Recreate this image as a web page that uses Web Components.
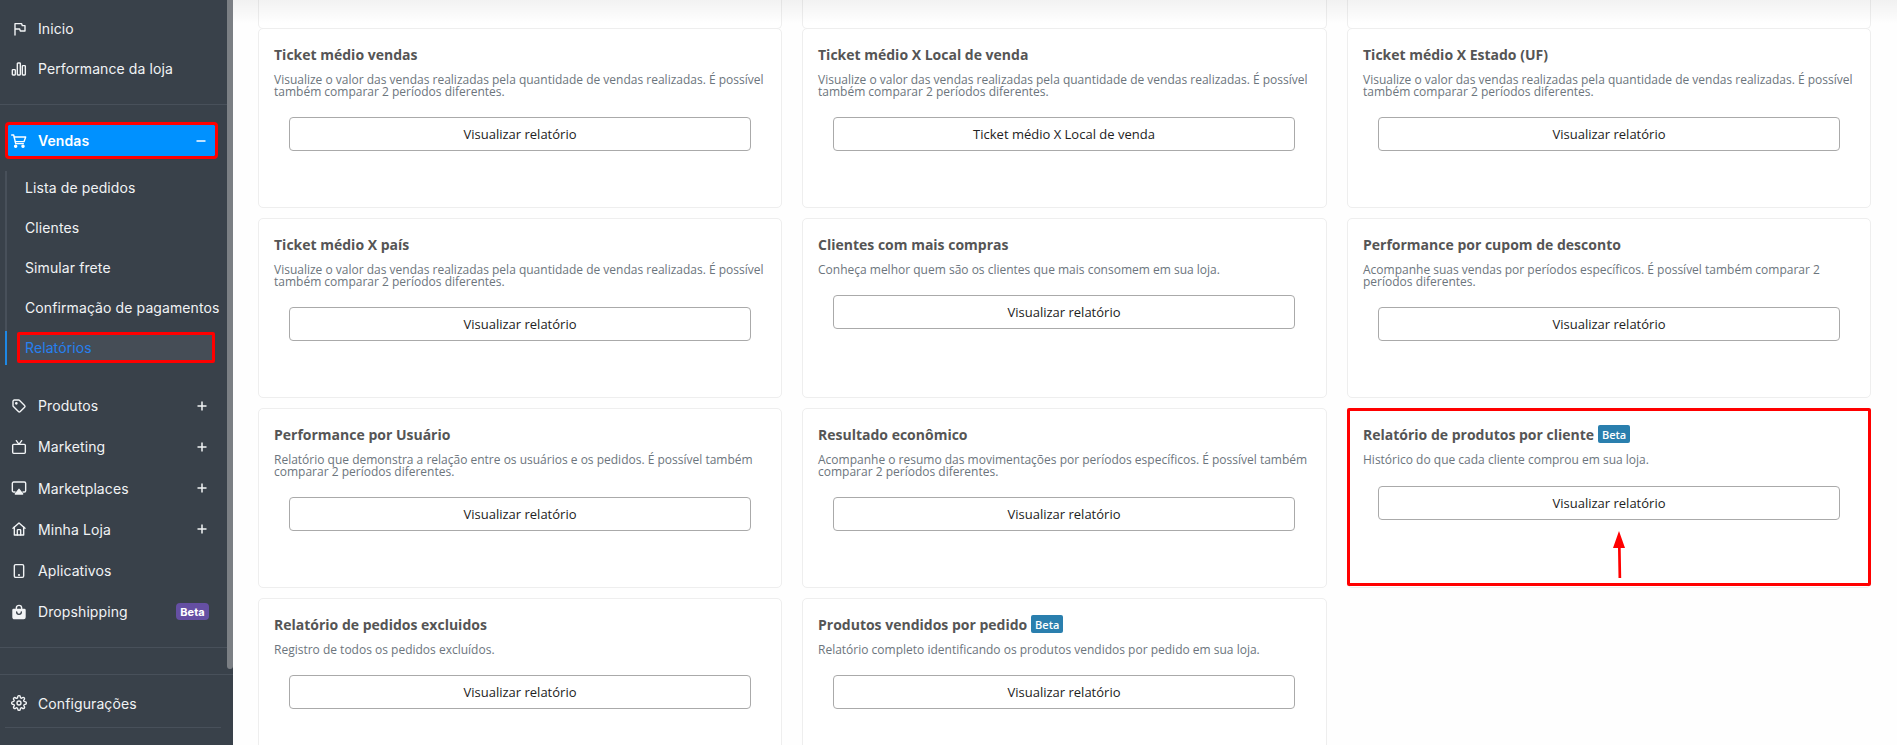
<!DOCTYPE html>
<html lang="pt-BR">
<head>
<meta charset="utf-8">
<title>Relatórios</title>
<style>
	html, body { margin: 0; height: 100%; overflow: hidden; background: #fefefe; }
</style>
</head>
<body>
<app-shell>
	<side-nav slot="nav">
		<nav-item icon="flag">Inicio</nav-item>
		<nav-item icon="chart">Performance da loja</nav-item>
		<nav-rule style="margin-top:15px"></nav-rule>
		<nav-item icon="cart" active toggle="minus" style="margin-top:20px">Vendas</nav-item>
		<sub-list style="margin-top:15px">
			<sub-item>Lista de pedidos</sub-item>
			<sub-item>Clientes</sub-item>
			<sub-item>Simular frete</sub-item>
			<sub-item>Confirmação de pagamentos</sub-item>
			<sub-item current>Relatórios</sub-item>
		</sub-list>
		<nav-item icon="tag" toggle="plus" class="tall" style="margin-top:20.7px">Produtos</nav-item>
		<nav-item icon="tv" toggle="plus" class="tall">Marketing</nav-item>
		<nav-item icon="airplay" toggle="plus" class="tall">Marketplaces</nav-item>
		<nav-item icon="home" toggle="plus" class="tall">Minha Loja</nav-item>
		<nav-item icon="device" class="tall">Aplicativos</nav-item>
		<nav-item icon="bag" class="tall">Dropshipping<beta-badge slot="end" tone="purple">Beta</beta-badge></nav-item>
		<nav-rule style="margin-top:14px"></nav-rule>
		<nav-rule style="margin-top:26px"></nav-rule>
		<nav-item icon="gear" style="margin-top:9px">Configurações</nav-item>
		<nav-rule style="margin:3px 12px 0 5px"></nav-rule>
	</side-nav>

	<report-grid>
		<report-card stub></report-card>
		<report-card stub></report-card>
		<report-card stub></report-card>

		<report-card heading="Ticket médio vendas">Visualize o valor das vendas realizadas pela quantidade de vendas realizadas. É possível também comparar 2 períodos diferentes.</report-card>
		<report-card heading="Ticket médio X Local de venda" action="Ticket médio X Local de venda">Visualize o valor das vendas realizadas pela quantidade de vendas realizadas. É possível também comparar 2 períodos diferentes.</report-card>
		<report-card heading="Ticket médio X Estado (UF)">Visualize o valor das vendas realizadas pela quantidade de vendas realizadas. É possível também comparar 2 períodos diferentes.</report-card>

		<report-card heading="Ticket médio X país">Visualize o valor das vendas realizadas pela quantidade de vendas realizadas. É possível também comparar 2 períodos diferentes.</report-card>
		<report-card heading="Clientes com mais compras">Conheça melhor quem são os clientes que mais consomem em sua loja.</report-card>
		<report-card heading="Performance por cupom de desconto">Acompanhe suas vendas por períodos específicos. É possível também comparar 2 períodos diferentes.</report-card>

		<report-card heading="Performance por Usuário">Relatório que demonstra a relação entre os usuários e os pedidos. É possível também comparar 2 períodos diferentes.</report-card>
		<report-card heading="Resultado econômico">Acompanhe o resumo das movimentações por períodos específicos. É possível também comparar 2 períodos diferentes.</report-card>
		<report-card heading="Relatório de produtos por cliente" highlight><beta-badge slot="badge">Beta</beta-badge>Histórico do que cada cliente comprou em sua loja.</report-card>

		<report-card heading="Relatório de pedidos excluidos">Registro de todos os pedidos excluídos.</report-card>
		<report-card heading="Produtos vendidos por pedido"><beta-badge slot="badge">Beta</beta-badge>Relatório completo identificando os produtos vendidos por pedido em sua loja.</report-card>
	</report-grid>
</app-shell>

<script>
	const ICONS = {
		flag: '<path d="M6 21V4h10l1 3h4v8h-7l-1-3H6"/>',
		chart: '<rect x="2" y="13" width="4.5" height="8" rx="1"/><rect x="9.5" y="3" width="4.5" height="18" rx="1"/><rect x="17" y="7" width="4.5" height="14" rx="1"/>',
		cart: '<circle cx="7" cy="20" r="1.6" fill="currentColor"/><circle cx="18" cy="20" r="1.6" fill="currentColor"/><path d="M1 3h3l3 13h11.5"/><path d="M5 6h17l-2.5 7H6.6"/>',
		tag: '<path d="M3 5a2 2 0 0 1 2-2h6.5a2 2 0 0 1 1.4.6l7.5 7.5a2 2 0 0 1 0 2.8l-6.5 6.5a2 2 0 0 1-2.8 0L3.6 12.9A2 2 0 0 1 3 11.5z"/><circle cx="8" cy="8" r="1" fill="currentColor"/>',
		tv: '<rect x="2.5" y="8" width="19" height="13.5" rx="1.5"/><path d="M8 2.5 12 8l4-5.5"/>',
		airplay: '<path d="M6 18H4a2 2 0 0 1-2-2V5a2 2 0 0 1 2-2h16a2 2 0 0 1 2 2v11a2 2 0 0 1-2 2h-2"/><path d="m12 14 5.5 7h-11z" fill="currentColor"/>',
		home: '<path d="M3 11 12 3l9 8"/><path d="M5 9v12h14V9"/><path d="M9.5 21v-7a1 1 0 0 1 1-1h3a1 1 0 0 1 1 1v7"/>',
		device: '<rect x="5" y="2.5" width="14" height="19" rx="2"/><circle cx="12" cy="18" r=".6" fill="currentColor"/>',
		bag: '<path d="M4 8h16a1 1 0 0 1 1 1v11a2 2 0 0 1-2 2H5a2 2 0 0 1-2-2V9a1 1 0 0 1 1-1z" fill="currentColor"/><path d="M8 9V6a4 4 0 0 1 8 0v3"/><path d="M8.5 12a3.5 3.5 0 0 0 7 0" stroke="#39414a"/>',
		gear: '<circle cx="12" cy="12" r="3"/><path d="M19.4 15a1.65 1.65 0 0 0 .33 1.82l.06.06a2 2 0 1 1-2.83 2.83l-.06-.06a1.65 1.65 0 0 0-2.82 1.17V21a2 2 0 1 1-4 0v-.09A1.65 1.65 0 0 0 7.26 19.7l-.06.06a2 2 0 1 1-2.83-2.83l.06-.06A1.65 1.65 0 0 0 3.26 14H3a2 2 0 1 1 0-4h.09A1.65 1.65 0 0 0 4.3 7.26l-.06-.06a2 2 0 1 1 2.83-2.83l.06.06A1.65 1.65 0 0 0 10 3.26V3a2 2 0 1 1 4 0v.09a1.65 1.65 0 0 0 2.8 1.17l.06-.06a2 2 0 1 1 2.83 2.83l-.06.06A1.65 1.65 0 0 0 20.74 10H21a2 2 0 1 1 0 4h-.09a1.65 1.65 0 0 0-1.51 1z"/>'
	};

	class AppShell extends HTMLElement {
		constructor() {
			super();
			this.attachShadow({mode: 'open'}).innerHTML = `
				<style>
					:host { display: flex; height: 745px; overflow: hidden; }
					.content { flex: 1; min-width: 0; position: relative; }
					.content::before {
						content: '';
						position: absolute;
						top: 0;
						left: 0;
						right: 0;
						height: 24px;
						background: linear-gradient(180deg, rgba(0,0,0,.05), transparent);
						z-index: 1;
					}
				</style>
				<slot name="nav"></slot>
				<div class="content"><slot></slot></div>
			`;
		}
	}

	class SideNav extends HTMLElement {
		constructor() {
			super();
			this.attachShadow({mode: 'open'}).innerHTML = `
				<style>
					:host {
						display: flex;
						flex-direction: column;
						flex: none;
						position: relative;
						width: 233px;
						height: 745px;
						box-sizing: border-box;
						padding-top: 9px;
						background: #39414a;
						color: #f1f3f5;
						font: 14px Inter, "Liberation Sans", sans-serif;
					}
					.thumb {
						position: absolute;
						top: 0;
						right: 0;
						width: 6px;
						height: 669px;
						border-radius: 0 0 3px 3px;
						background: #7b7f84;
					}
				</style>
				<slot></slot>
				<div class="thumb"></div>
			`;
		}
	}

	class NavItem extends HTMLElement {
		constructor() {
			super();
			const icon = ICONS[this.getAttribute('icon')] || '';
			const toggle = this.getAttribute('toggle');
			const toggleMark = toggle === 'plus' ? '<path d="M5 .5v9M.5 5h9"/>' : '<path d="M.5 5h9"/>';
			this.attachShadow({mode: 'open'}).innerHTML = `
				<style>
					:host {
						display: flex;
						align-items: center;
						flex: none;
						box-sizing: border-box;
						height: 40px;
						padding: 0 26px 1px 11px;
						letter-spacing: .1px;
					}
					:host(.tall) { height: 41.2px; }
					:host([active]) {
						height: 31px;
						margin: 0 18px 0 8px;
						padding: 0 9px 0 3px;
						background: #0091ff;
						color: #fff;
						font-weight: 600;
						outline: 3px solid #f00;
						border-radius: 1px;
					}
					svg.icon {
						flex: none;
						width: 16px;
						height: 16px;
						margin-right: 11px;
						fill: none;
						stroke: currentColor;
						stroke-width: 2.100;
						stroke-linecap: round;
						stroke-linejoin: round;
					}
					.label { flex: 1; white-space: nowrap; }
					svg.toggle {
						flex: none;
						width: 10px;
						height: 10px;
						fill: none;
						stroke: currentColor;
						stroke-width: 1.5;
					}
					::slotted(beta-badge) { margin-right: -2px; }
				</style>
				<svg class="icon" viewBox="0 0 24 24">${icon}</svg>
				<span class="label"><slot></slot></span>
				<slot name="end"></slot>
				${toggle ? `<svg class="toggle" viewBox="0 0 10 10">${toggleMark}</svg>` : ''}
			`;
		}
	}

	class NavRule extends HTMLElement {
		constructor() {
			super();
			this.attachShadow({mode: 'open'}).innerHTML = `
				<style>
					:host { display: block; flex: none; height: 1px; background: #48505a; }
				</style>
			`;
		}
	}

	class SubList extends HTMLElement {
		constructor() {
			super();
			this.attachShadow({mode: 'open'}).innerHTML = `
				<style>
					:host {
						display: flex;
						flex-direction: column;
						flex: none;
						gap: 6px;
						margin-left: 5px;
						border-left: 2px solid #48505a;
						position: relative;
					}
				</style>
				<slot></slot>
			`;
		}
	}

	class SubItem extends HTMLElement {
		constructor() {
			super();
			this.attachShadow({mode: 'open'}).innerHTML = `
				<style>
					:host {
						display: flex;
						align-items: center;
						box-sizing: border-box;
						height: 34px;
						padding: 0 0 1px 18px;
						white-space: nowrap;
						letter-spacing: .1px;
						position: relative;
					}
					:host([current]) {
						color: #2680f0;
						margin: 1px 18px 2px 10px;
						height: 31px;
						padding: 0 0 0 5px;
						background: #454d56;
						border: 3px solid #f00;
						border-radius: 2px;
					}
					:host([current])::before {
						content: '';
						position: absolute;
						left: -15px;
						top: -4px;
						bottom: -5px;
						width: 2px;
						background: #1e88e5;
					}
				</style>
				<slot></slot>
			`;
		}
	}

	class BetaBadge extends HTMLElement {
		constructor() {
			super();
			this.attachShadow({mode: 'open'}).innerHTML = `
				<style>
					:host {
						display: inline-flex;
						align-items: center;
						justify-content: center;
						box-sizing: border-box;
						width: 32px;
						height: 18px;
						border-radius: 2px;
						background: #2a7fae;
						color: #fff;
						font: 600 11px "Open Sans", sans-serif;
					}
					:host([tone="purple"]) {
						width: 33px;
						height: 17px;
						border-radius: 4px;
						background: #654fa3;
						font: 700 11px Inter, sans-serif;
					}
				</style>
				<slot></slot>
			`;
		}
	}

	class ReportGrid extends HTMLElement {
		constructor() {
			super();
			this.attachShadow({mode: 'open'}).innerHTML = `
				<style>
					:host {
						display: grid;
						grid-template-columns: 523.5px 524.5px 523.5px;
						grid-template-rows: 18px;
						grid-auto-rows: 180px;
						gap: 10px 20.5px;
						padding-left: 25px;
						font-family: "Open Sans", sans-serif;
					}
				</style>
				<slot></slot>
			`;
		}
	}

	class ReportCard extends HTMLElement {
		constructor() {
			super();
			const heading = this.getAttribute('heading') || '';
			const action = this.getAttribute('action') || 'Visualizar relatório';
			// the red box and the arrow are marks laid over the highlighted card
			const marks = this.hasAttribute('highlight') ? `
				<div class="frame"></div>
				<svg class="arrow" width="14" height="50" viewBox="0 0 14 50">
					<path d="M7 0 13 17H8.7L9.200 47H6.500L6 17H1z" fill="#f00"/>
				</svg>` : '';
			this.attachShadow({mode: 'open'}).innerHTML = `
				<style>
					:host {
						display: block;
						position: relative;
						box-sizing: border-box;
						padding: 14px 15px;
						background: #fff;
						border: 1px solid #eee;
						border-radius: 5px;
						color: #6c757d;
					}
					:host([stub]) { border-top: 0; border-radius: 0 0 5px 5px; }
					h3 {
						display: flex;
						align-items: center;
						gap: 4px;
						height: 22px;
						margin: 0 0 9px;
						font-size: 14px;
						font-weight: 700;
						color: #555;
					}
					p {
						margin: 0 0 19px;
						font-size: 12px;
						line-height: 12px;
					}
					:host([highlight]) p { margin-bottom: 20px; }
					button {
						display: block;
						width: 462px;
						height: 34px;
						margin: 0 0 0 15px;
						padding: 0;
						background: #fff;
						border: 1px solid #aaa;
						border-radius: 4px;
						color: #222;
						font: 13px "Open Sans", sans-serif;
					}
					.frame {
						position: absolute;
						top: -1px;
						left: -1px;
						right: -1px;
						bottom: 1px;
						border: 3px solid #f00;
						border-radius: 2px;
					}
					.arrow { position: absolute; left: 264px; top: 122px; }
				</style>
				${this.hasAttribute('stub') ? '' : `
					<h3>${heading}<slot name="badge"></slot></h3>
					<p><slot></slot></p>
					<button type="button">${action}</button>
					${marks}
				`}
			`;
		}
	}

	customElements.define('app-shell', AppShell);
	customElements.define('side-nav', SideNav);
	customElements.define('nav-item', NavItem);
	customElements.define('nav-rule', NavRule);
	customElements.define('sub-list', SubList);
	customElements.define('sub-item', SubItem);
	customElements.define('beta-badge', BetaBadge);
	customElements.define('report-grid', ReportGrid);
	customElements.define('report-card', ReportCard);
</script>
</body>
</html>
